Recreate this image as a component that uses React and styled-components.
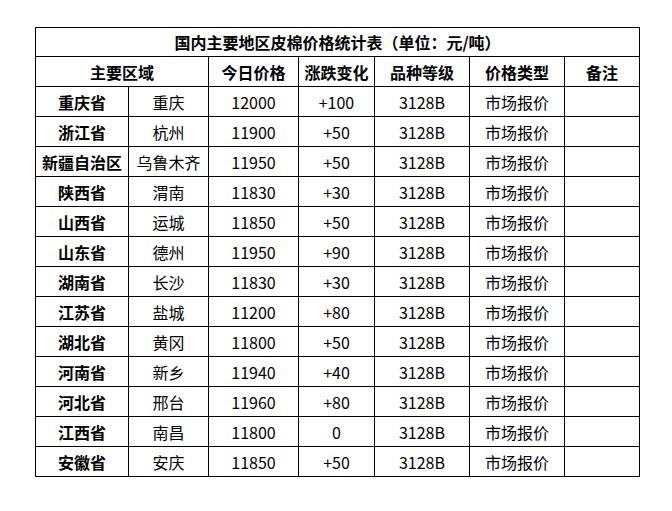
import React from "react";
import styled, { createGlobalStyle } from "styled-components";

const GlobalStyle = createGlobalStyle`
  body {
    margin: 0;
    background: #fff;
    font-family: "Noto Sans CJK SC", "Liberation Sans", sans-serif;
    color: #000;
  }
`;

const Page = styled.div`
  padding: 27px 0 0 35px;
`;

const Table = styled.table`
  border-collapse: collapse;
  table-layout: fixed;
  width: 604px;
  font-size: 16px;
`;

const Cell = styled.td`
  border: 1px solid #000;
  height: ${props => props.h || 29}px;
  padding: 0;
  text-align: center;
  vertical-align: middle;
  font-weight: ${props => (props.bold ? 700 : 400)};
  white-space: nowrap;
  line-height: 1;
`;

const cols = [93, 80, 90, 76, 95, 95, 75];

const rows = [
  ["重庆省", "重庆", "12000", "+100"],
  ["浙江省", "杭州", "11900", "+50"],
  ["新疆自治区", "乌鲁木齐", "11950", "+50"],
  ["陕西省", "渭南", "11830", "+30"],
  ["山西省", "运城", "11850", "+50"],
  ["山东省", "德州", "11950", "+90"],
  ["湖南省", "长沙", "11830", "+30"],
  ["江苏省", "盐城", "11200", "+80"],
  ["湖北省", "黄冈", "11800", "+50"],
  ["河南省", "新乡", "11940", "+40"],
  ["河北省", "邢台", "11960", "+80"],
  ["江西省", "南昌", "11800", "0"],
  ["安徽省", "安庆", "11850", "+50"],
];

const App = () => {
  return (
    <Page>
      <GlobalStyle />
      <Table>
        <colgroup>
          {cols.map((w, i) => <col key={i} style={{ width: w }} />)}
        </colgroup>
        <tbody>
          <tr>
            <Cell colSpan={7} bold h={28}>国内主要地区皮棉价格统计表（单位：元/吨）</Cell>
          </tr>
          <tr>
            <Cell colSpan={2} bold>主要区域</Cell>
            <Cell bold>今日价格</Cell>
            <Cell bold>涨跌变化</Cell>
            <Cell bold>品种等级</Cell>
            <Cell bold>价格类型</Cell>
            <Cell bold>备注</Cell>
          </tr>
          {rows.map(r => (
            <tr key={r[0]}>
              <Cell bold>{r[0]}</Cell>
              <Cell>{r[1]}</Cell>
              <Cell>{r[2]}</Cell>
              <Cell>{r[3]}</Cell>
              <Cell>3128B</Cell>
              <Cell>市场报价</Cell>
              <Cell></Cell>
            </tr>
          ))}
        </tbody>
      </Table>
    </Page>
  );
};

export default App;
